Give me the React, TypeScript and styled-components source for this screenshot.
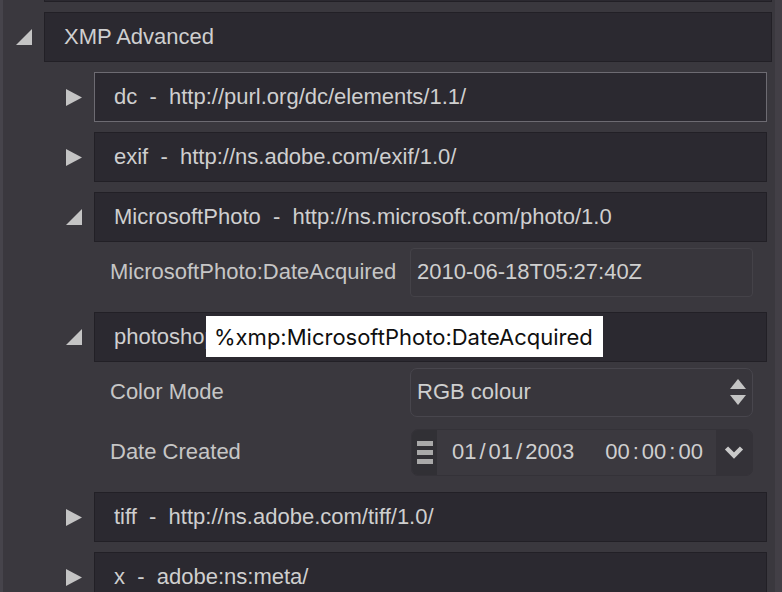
import React from 'react'
import styled, { createGlobalStyle } from 'styled-components'

const GlobalStyle = createGlobalStyle`
  html, body {
    margin: 0;
    padding: 0;
    background: #3a383e;
    overflow: hidden;
  }
  body {
    font-family: "Liberation Sans", Arial, sans-serif;
  }
`

const Window = styled.div`
  display: flex;
  width: 782px;
  height: 592px;
  overflow: hidden;
  background: #3a383e;
`

const LeftEdge = styled.div`
  width: 3px;
  flex-shrink: 0;
  background: #46444b;
`

const ScrollTrack = styled.div`
  width: 7px;
  flex-shrink: 0;
  background: #423f46;
`

const Content = styled.div`
  flex: 1;
  display: flex;
  flex-direction: column;
  gap: 10px;
  padding-right: 3px;
`

const Node = styled.div`
  display: flex;
  flex-direction: column;
`

const Row = styled.div<{ $stub?: boolean }>`
  display: flex;
  align-items: center;
  height: 50px;
  flex-shrink: 0;
  margin-top: ${p => (p.$stub ? '-48px' : '0')};
`

const Toggle = styled.div<{ $level: number }>`
  width: ${p => (p.$level === 0 ? 41 : 50)}px;
  flex-shrink: 0;
  display: flex;
  align-items: center;
  padding-left: ${p => (p.$level === 0 ? 13 : 22)}px;
  box-sizing: border-box;
`

const HeaderBox = styled.div<{ $focused?: boolean }>`
  position: relative;
  flex: 1;
  height: 50px;
  box-sizing: border-box;
  display: flex;
  align-items: center;
  padding-left: 19px;
  background: #2b2930;
  border: 1px solid ${p => (p.$focused ? '#6d6b72' : '#222026')};
  color: #cfcfcf;
  font-size: 22px;
  white-space: pre;
`

const Children = styled.div`
  display: flex;
  flex-direction: column;
  gap: 10px;
  margin-top: 10px;
  padding-left: 41px;
  margin-right: 5px;
`

const FieldRow = styled.div`
  display: grid;
  grid-template-columns: 300px 1fr;
  align-items: center;
  height: 60px;
  margin-left: 50px;
  padding: 0 14px 0 16px;
`

const Label = styled.div`
  color: #c6c6c6;
  font-size: 22px;
`

const TextInput = styled.div`
  height: 49px;
  box-sizing: border-box;
  display: flex;
  align-items: center;
  padding-left: 6px;
  border: 1px solid #444248;
  border-radius: 4px;
  background: #38363c;
  color: #cfcfcf;
  font-size: 22px;
`

const Select = styled(TextInput)`
  justify-content: space-between;
  padding-right: 6px;
  border-radius: 7px;
  border-color: #48464d;
`

const DateBox = styled.div`
  height: 47px;
  margin-left: 1px;
  box-sizing: border-box;
  display: flex;
  border: 1px solid #343238;
  border-radius: 7px;
  overflow: hidden;
  background: #3b393f;
`

const Handle = styled.div`
  width: 25px;
  display: flex;
  flex-direction: column;
  justify-content: center;
  align-items: center;
  gap: 4px;
  background: #313035;
`

const Bar = styled.div`
  width: 16px;
  height: 5px;
  background: #a9a9a9;
`

const DateText = styled.div`
  flex: 1;
  display: flex;
  align-items: center;
  gap: 31px;
  padding-left: 15px;
  color: #cfcfcf;
  font-size: 22px;
`

const Segments = styled.div`
  display: flex;
  gap: 3px;
`

const DropButton = styled.div`
  width: 36px;
  display: flex;
  align-items: center;
  justify-content: center;
  background: #343238;
`

const Tooltip = styled.div`
  position: absolute;
  left: 111px;
  top: 3px;
  height: 41px;
  display: flex;
  align-items: center;
  padding: 0 10px 0 8px;
  background: #ffffff;
  color: #0f0f0f;
  font-family: Inter, "Liberation Sans", sans-serif;
  font-size: 22px;
  white-space: nowrap;
`

const Collapsed = () => (
  <svg width="16" height="17" viewBox="0 0 16 17">
    <polygon points="0,0 16,8.5 0,17" fill="#c4c4c4" />
  </svg>
)

const Expanded = () => (
  <svg width="16" height="16" viewBox="0 0 16 16">
    <polygon points="0,16 16,16 16,0" fill="#c4c4c4" />
  </svg>
)

const UpDown = () => (
  <svg width="16" height="27" viewBox="0 0 16 27">
    <polygon points="8,0 16,10 0,10" fill="#c4c4c4" />
    <polygon points="0,16 16,16 8,26" fill="#c4c4c4" />
  </svg>
)

const Chevron = () => (
  <svg width="20" height="14" viewBox="0 0 20 14">
    <polyline points="2.5,3 10,10.5 17.5,3" fill="none" stroke="#cacaca" strokeWidth="4.5" />
  </svg>
)

const App: React.FC = () => {
  return (
    <>
      <GlobalStyle />
      <Window>
        <LeftEdge />
        <Content>
          <Row $stub>
            <Toggle $level={0} />
            <HeaderBox />
          </Row>

          <Node>
            <Row>
              <Toggle $level={0}><Expanded /></Toggle>
              <HeaderBox>XMP Advanced</HeaderBox>
            </Row>
            <Children>
              <Row>
                <Toggle $level={1}><Collapsed /></Toggle>
                <HeaderBox $focused>{'dc  -  http://purl.org/dc/elements/1.1/'}</HeaderBox>
              </Row>
              <Row>
                <Toggle $level={1}><Collapsed /></Toggle>
                <HeaderBox>{'exif  -  http://ns.adobe.com/exif/1.0/'}</HeaderBox>
              </Row>

              <Node>
                <Row>
                  <Toggle $level={1}><Expanded /></Toggle>
                  <HeaderBox>{'MicrosoftPhoto  -  http://ns.microsoft.com/photo/1.0'}</HeaderBox>
                </Row>
                <FieldRow>
                  <Label>MicrosoftPhoto:DateAcquired</Label>
                  <TextInput>2010-06-18T05:27:40Z</TextInput>
                </FieldRow>
              </Node>

              <Node>
                <Row>
                  <Toggle $level={1}><Expanded /></Toggle>
                  <HeaderBox>
                    {'photoshop  -  http://ns.adobe.com/photoshop/1.0/'}
                    <Tooltip>%xmp:MicrosoftPhoto:DateAcquired</Tooltip>
                  </HeaderBox>
                </Row>
                <FieldRow>
                  <Label>Color Mode</Label>
                  <Select>
                    RGB colour
                    <UpDown />
                  </Select>
                </FieldRow>
                <FieldRow>
                  <Label>Date Created</Label>
                  <DateBox>
                    <Handle>
                      <Bar />
                      <Bar />
                      <Bar />
                    </Handle>
                    <DateText>
                      <Segments>
                        <span>01</span><span>/</span><span>01</span><span>/</span><span>2003</span>
                      </Segments>
                      <Segments>
                        <span>00</span><span>:</span><span>00</span><span>:</span><span>00</span>
                      </Segments>
                    </DateText>
                    <DropButton><Chevron /></DropButton>
                  </DateBox>
                </FieldRow>
              </Node>

              <Row>
                <Toggle $level={1}><Collapsed /></Toggle>
                <HeaderBox>{'tiff  -  http://ns.adobe.com/tiff/1.0/'}</HeaderBox>
              </Row>
              <Row>
                <Toggle $level={1}><Collapsed /></Toggle>
                <HeaderBox>{'x  -  adobe:ns:meta/'}</HeaderBox>
              </Row>
            </Children>
          </Node>
        </Content>
        <ScrollTrack />
      </Window>
    </>
  )
}

export default App
